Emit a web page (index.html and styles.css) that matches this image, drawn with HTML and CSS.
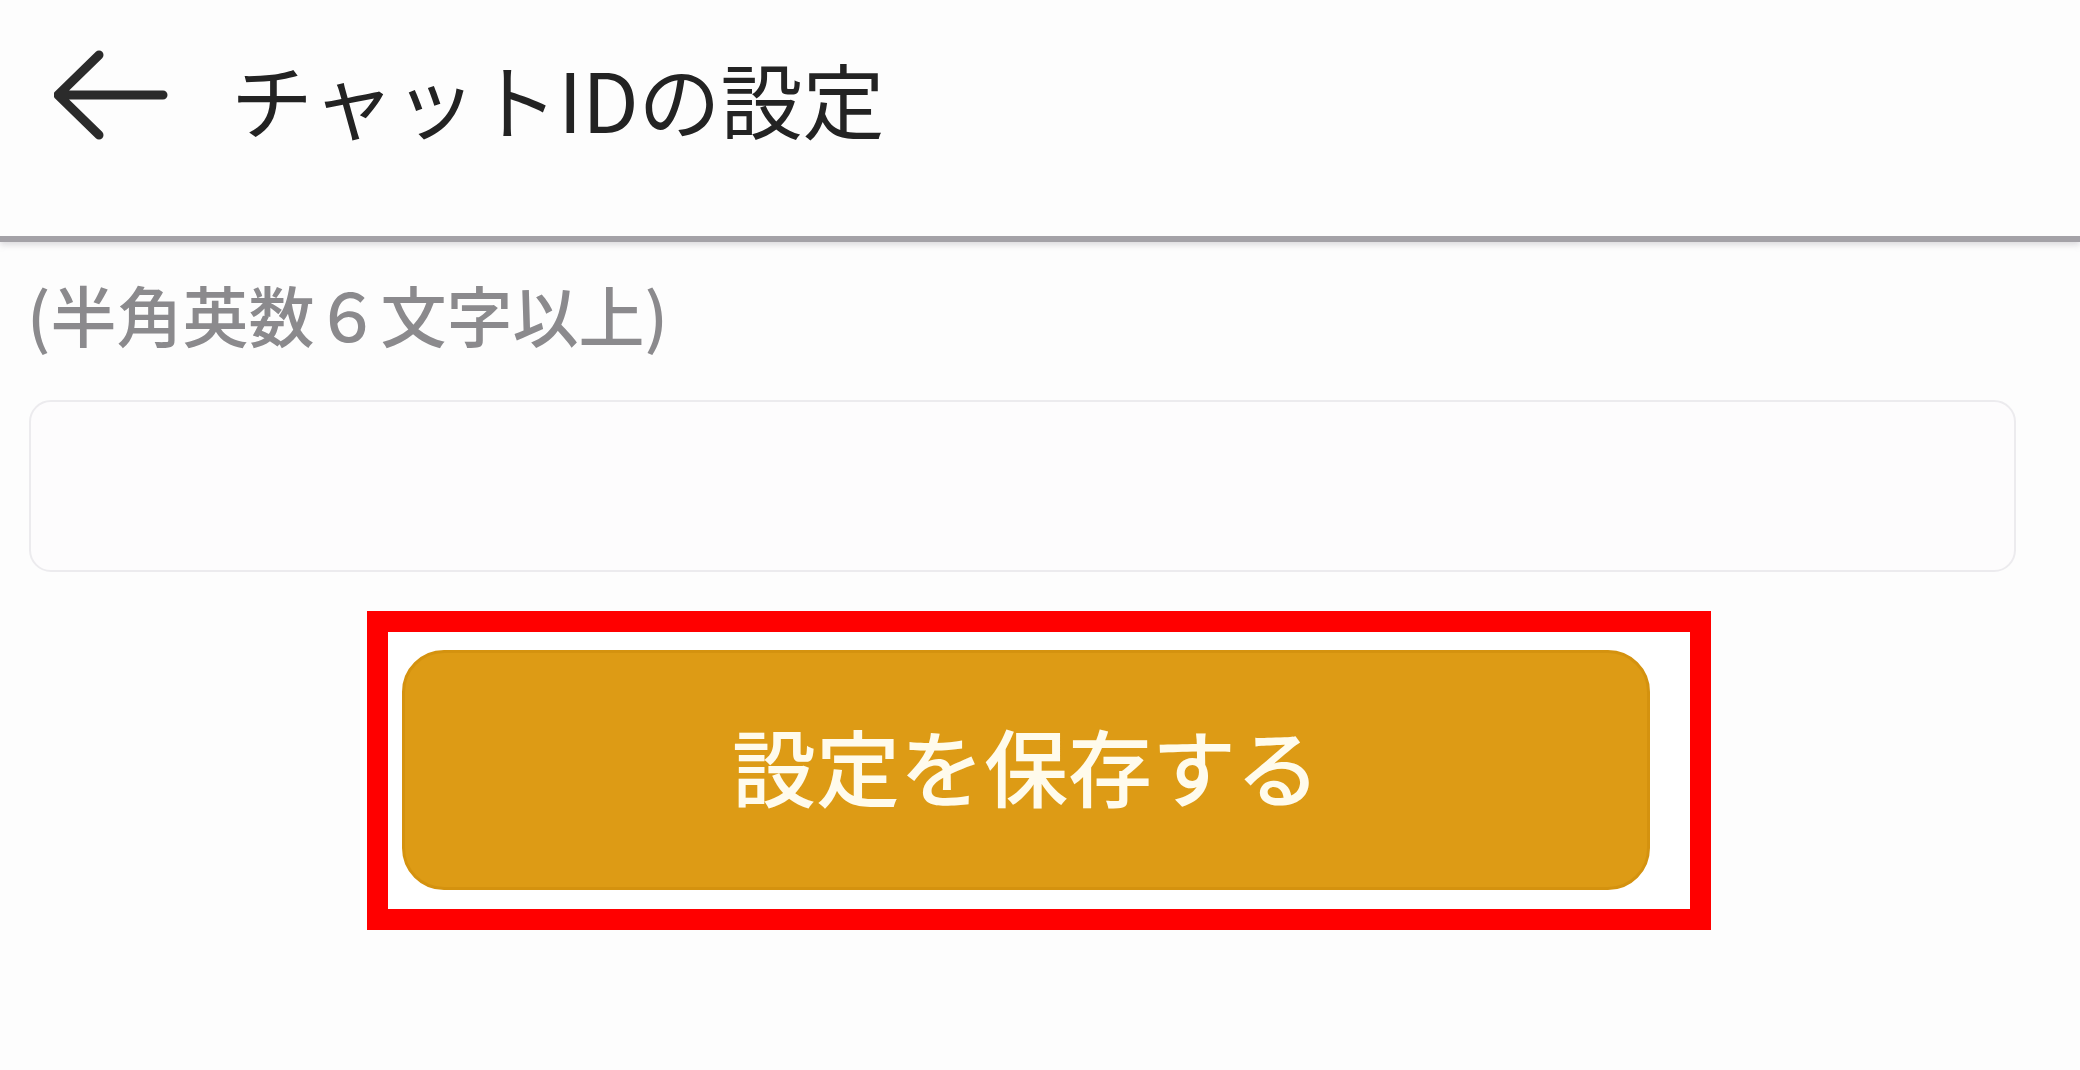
FILE: index.html
```html
<!DOCTYPE html>
<html lang="ja">
<head>
    <meta charset="UTF-8">
    <meta name="viewport" content="width=device-width, initial-scale=1.0">
    <title>チャットIDの設定</title>
    <link rel="stylesheet" href="styles.css">
</head>
<body>
    <header class="topbar">
        <a class="back" href="#" aria-label="戻る">
            <svg width="120" height="100" viewBox="0 0 120 100">
                <path d="M4 45 L45 5 M4 45 L45 85 M4 45 H109" fill="none" stroke="#2b2b2b" stroke-width="9" stroke-linecap="round" stroke-linejoin="round"/>
            </svg>
        </a>
        <h1 class="title">チャットIDの設定</h1>
    </header>

    <main class="content">
        <p class="hint">(半角英数６文字以上)</p>
        <input type="text" class="id-input" id="chatId">

        <div class="highlight">
            <button class="save-btn" type="button">設定を保存する</button>
        </div>
    </main>
</body>
</html>
```

FILE: styles.css
```css
body {
    margin: 0;
    background: #fdfdfd;
    font-family: "Noto Sans CJK JP", "Noto Sans", sans-serif;
}
.topbar {
    height: 236px;
    display: flex;
    align-items: center;
    padding-left: 54px;
    border-bottom: 6px solid #a4a2a7;
    box-shadow: 0 3px 6px rgba(160, 158, 165, 0.35);
    background: #fdfdfd;
}
.back {
    display: flex;
    margin-top: -36px;
}
.title {
    margin: -40px 0 0 57px;
    font-size: 82px;
    font-weight: 400;
    color: #232323;
    line-height: 1;
}
.content {
    padding: 0 64px 0 29px;
}
.hint {
    margin: 38px 0 0 -2px;
    font-size: 66px;
    font-weight: 500;
    line-height: 1;
    color: #8b8a8d;
}
.id-input {
    display: block;
    box-sizing: border-box;
    width: 100%;
    height: 172px;
    margin-top: 54px;
    border: 2px solid #ecebee;
    border-radius: 22px;
    background: #fdfcfd;
    outline: none;
}
.highlight {
    box-sizing: border-box;
    width: 1344px;
    margin: 39px 0 0 338px;
    border: 21px solid #ff0000;
    padding: 18px 40px 19px 14px;
    background: #ffffff;
}
.save-btn {
    display: block;
    width: 100%;
    height: 240px;
    padding: 0 0 12px;
    border: 3px solid #d4920f;
    border-radius: 42px;
    background: #dd9b15;
    color: #fffbec;
    font-family: "Noto Sans CJK JP", sans-serif;
    font-size: 84px;
    font-weight: 500;
    cursor: pointer;
}
```
